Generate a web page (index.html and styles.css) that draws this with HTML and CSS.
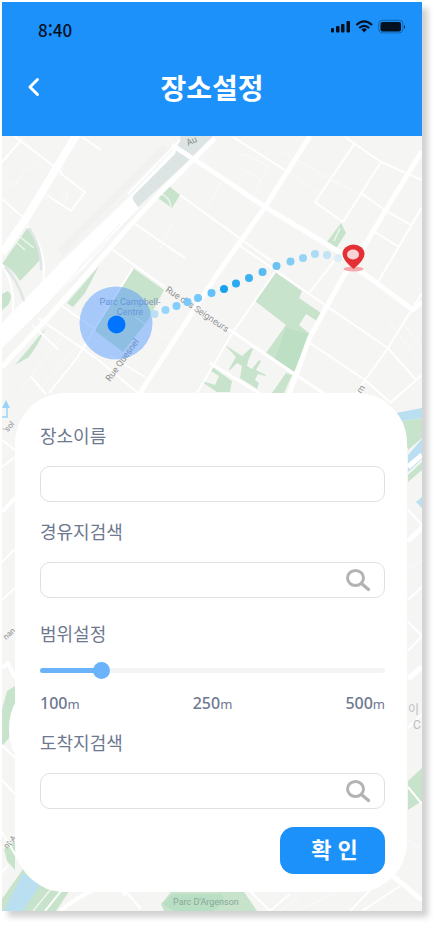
FILE: index.html
```html
<!DOCTYPE html>
<html lang="ko">
<head>
<meta charset="utf-8">
<meta name="viewport" content="width=device-width, initial-scale=1">
<title>장소설정</title>
<link rel="stylesheet" href="styles.css">
</head>
<body>
<div class="phone">
  <header class="header">
    <div class="status">
      <span class="time">8:40</span>
      <svg class="status-icons" viewBox="330 17 76 20" aria-hidden="true">
        <g fill="#03101f">
          <rect x="331" y="28" width="3" height="4.500" rx="1"/>
          <rect x="336" y="26" width="3.500" height="6.500" rx="1"/>
          <rect x="341" y="24" width="3.500" height="8.500" rx="1"/>
          <rect x="346.500" y="21" width="3.500" height="11.500" rx="1"/>
          <rect x="380.500" y="22" width="20.500" height="9.500" rx="2"/>
          <path d="M404 25q1.800 1.800 0 4z"/>
          <path d="M361.500 29.500q2.700-2.400 5.400 0l-2.700 3z"/>
        </g>
        <rect x="378.800" y="20.300" width="24" height="12.600" rx="3.500" fill="none" stroke="#03101f" stroke-opacity=".35"/>
        <g fill="none" stroke="#03101f" stroke-width="2.200">
          <path d="M356.400 25q7.800-7.200 15.600 0"/>
          <path d="M359.200 28q5-4.400 10 0"/>
        </g>
      </svg>
    </div>
    <div class="titlebar">
      <button class="back" type="button" aria-label="뒤로">
        <svg viewBox="0 0 20 20" aria-hidden="true"><path d="M13.500 2.500 6 10l7.500 7.500" fill="none" stroke="#fff" stroke-width="3" stroke-linecap="round" stroke-linejoin="round"/></svg>
      </button>
      <h1 class="title">장소설정</h1>
    </div>
  </header>

  <main class="content">
    <svg class="map" viewBox="2 136 420 775" preserveAspectRatio="xMidYMin slice" aria-hidden="true">
      <rect x="2" y="136" width="420" height="775" fill="#f5f5f4"/>
      <path d="M165 147 60 252" fill="none" stroke="#f1f1f0" stroke-width="7"/>
      <!-- parks -->
      <g fill="#c8e3cc">
        <path d="M28 227q11 14 13 32l-21 22q-7-12-18-17z"/>
        <path d="M2 294l6-3q6 5 0 14l-6 5z"/>
        <path d="M158 198l11-12 11 9-8 13z"/>
        <path d="M326 243l15-20 5 10-11 17z"/>
        <path d="M133 268l31 22-16 30-25 32-29-22z"/>
        <path d="M99 266l-32 37 6 4 12-14z"/>
        <path d="M46 328l-31 37 14-8 8-12z"/>
        <path d="M275 272l27 19-3 7 22 15-4 8-11-7-7 11 11 9-16 38-28-19 20-28-31-24z"/>
        <path d="M225 345l17 11 9-8 2 1-5 12-1 5 5 3 7-9 2 1-5 9 10 5-1 1-7-2-3 6 4 3-2 6-17-11 2-12-5-3-7 7-1-1 7-12z"/>
        <path d="M211 366l21 15-2 11h-13l-15-10v-1l13 4 4-9-8-5z"/>
        <path d="M286 373l6 2-8 18h-12z"/>
        <path d="M402 421l20-3v20l-14 12zM408 475l14-13v8l-14 12z"/>
        <path d="M15 686l-8 5-5 19v36l7-8 6-20z"/>
        <path d="M408 781l14-13v33l-14 9z"/>
        <path d="M4 849l11-8v29l-8-9z"/>
        <path d="M2 899l28-40 40 31-14 21H2z"/>
        <path d="M161 904l10-12h73l13 19h-93z"/>
      </g>
      <path d="M286 328l24 6-16 38-19-13z" fill="#bddfc3"/>
      <path d="M173 894h48l4 8-12 9h-39l-12-7z" fill="#b8dfc4"/>
      <!-- water -->
      <g fill="#b9dff1">
        <path d="M396 413l26-5v10l-20 3zM408 455l14-16v20l-14 13zM416 502l6-5v11z"/>
        <path d="M23 873l17 12-17 26H4z"/>
      </g>
      <path d="M161 194q9 3 10 13M20 237l14 11M17 243l8 7M334 241l6-13M33 911l18-22" fill="none" stroke="#edf6ee" stroke-width="1.500"/>
      <!-- streets -->
      <g fill="none" stroke="#fff" stroke-width="2" stroke-linejoin="round">
        <path d="M14 136l48 36M22 139 2 162M82 137l19 13M47 195l24 16 14-19-25-19M2 199l16 14 11 9"/>
        <path d="M180 195l58 42 42 30M135 224l50 34M110 248l55 39"/>
        <path d="M233 137l55 35M345 137l36 25 41 18M355 143l-40 59 28 20 38-60M361 193l24 17 26 15M422 207l-31 53-13 22M375 232l24 15"/>
        <path d="M236 243l92 64 60 41 28 32M335 260l-25 32M310 343l55 37 26 23M422 293l-34 55-23 32-18 28M422 375l-32 28M275 272l-42 60-36 61M38 318l58 40 42 35M32 325l27 25M133 268l-38 60-18 30-28 35M31 377l15 17M62 306l34 24M109 355l36 22"/>
        <path d="M27 226q15 18 17 39 1 22-8 35M2 264q15 25 10 52"/>
        <path d="M2 440l13 10M2 467l13-10M2 562l13-13M2 600l13-12M408 510l14 15-14 17M408 600l14-13M408 622l14 14-14 15M408 728l14-14M408 787l14 17M2 745l13 13M2 780l13 14M2 832l20 34M8 865l-6 8M45 911l16-20M126 892l15 17M250 891l20 20 20-17M350 911l30-31M362 911l38-25"/>
      </g>
      <g fill="none" stroke="#fbfbfb" stroke-width="1">
        <path d="M8 183l7 2 10-14 14-9M60 198l4-8 4 5-4 8M230 165l14-11 24 12-14 28M240 178l7-7 15 10M288 172l30 20M280 150l60 35M335 181l42 23M224 176l-16 30M175 220l-16 30M388 320l34 45M406 327l16 21"/>
        <path d="M20 390l44-56M30 400l51-58M175 345l-40-28M408 570l14-10M408 840l14 10M280 911l22-17M300 910l36-17"/>
      </g>
      <!-- rail yard -->
      <path d="M174 149 128 198 60 263 2 323v25l78-76 59-64-5-7 46-44z" fill="#fff"/>
      <path d="M181 136h32l-26 26-49 45-5-7v-4l42-42 3-8z" fill="#dde4e4"/>
      <g fill="none" stroke="#f0f1f0" stroke-width="1">
        <path d="M172 146l-44 48-70 66M132 216l-48 48-44 48M120 224l-42 44"/>
      </g>
      <!-- major roads -->
      <g fill="none" stroke="#fff" stroke-linejoin="round">
        <path d="M180 140 128 194" stroke-width="2"/>
        <path d="M77 134 25 220 2 253" stroke-width="8"/>
        <path d="M215 138l-26 26-32 32-23 25-24 27-23 26-44 49-41 44" stroke-width="5"/>
        <path d="M172 145l46 30 47 32 76 46 14 14 58 43 9-8" stroke-width="5"/>
        <path d="M310 136l-45 71-47 66-80 123M422 151l-35 57-22 37-22 32-33 60-22 60" stroke-width="5"/>
        <path d="M210 363l52 32M233 332l63 43 30 20M200 312l33 20" stroke-width="3"/>
        <path d="M408 467l14-12M408 541l14-13M408 679l14-12M388 872l34 28" stroke-width="5"/>
        <path d="M60 911q50-39 66-16M2 512l13-14M2 668l6-5 7 15" stroke-width="4"/>
      </g>
      <path d="M29 228q13 20 12 42M5 267q12 12 19 34" fill="none" stroke="#e0e5e5" stroke-width="2.500"/>
      <path d="M2 417h5v-11" fill="none" stroke="#9bd3f7" stroke-width="1.500"/>
      <path d="M2 408l4-8 4 8z" fill="#9bd3f7"/>
      <g class="map-text">
        <text class="park" x="130" y="305" text-anchor="middle">Parc Campbell-</text>
        <text class="park" x="130" y="315" text-anchor="middle">Centre</text>
        <text transform="translate(165 291) rotate(34)">Rue des Seigneurs</text>
        <text transform="translate(110 382) rotate(-54)">Rue Quesnel</text>
        <text transform="translate(361 394) rotate(-55)">m</text>
        <text transform="translate(188 146) rotate(-25)">Au</text>
        <text class="edge" transform="translate(7 433) rotate(-48)">'sol</text>
        <text class="edge" transform="translate(6 640) rotate(-42)">nan</text>
        <text class="edge" transform="translate(7 849) rotate(-48)">nt-A</text>
        <text class="park-green" x="173" y="905">Parc D'Argenson</text>
        <text class="district" x="408" y="714">이</text>
        <text class="district" x="413" y="729">C</text>
      </g>
      <ellipse cx="31" cy="729" rx="22" ry="38" fill="#fff"/>
      <!-- current position and route -->
      <circle cx="116" cy="323" r="36.500" fill="#4b94ff" fill-opacity=".46"/>
      <circle cx="116.500" cy="324.500" r="9" fill="#0073ff"/>
      <g>
        <circle cx="154.500" cy="314" r="4" fill="#b9e0f4"/>
        <circle cx="165.500" cy="310" r="4" fill="#97d5fb"/>
        <circle cx="176.500" cy="306" r="4" fill="#84cdfb"/>
        <circle cx="187.500" cy="302" r="4" fill="#78c8fa"/>
        <circle cx="198" cy="298" r="4" fill="#74c7fb"/>
        <circle cx="211.500" cy="293" r="4" fill="#62c0fa"/>
        <circle cx="224" cy="289" r="4" fill="#1aa2ee"/>
        <circle cx="236" cy="283.500" r="4" fill="#29a9f0"/>
        <circle cx="249" cy="278" r="4" fill="#3eb1f1"/>
        <circle cx="262.500" cy="272" r="4" fill="#58baf1"/>
        <circle cx="276.500" cy="266" r="4" fill="#6dc2f2"/>
        <circle cx="290.500" cy="261.500" r="4" fill="#83ccf3"/>
        <circle cx="303" cy="258" r="4" fill="#97d4f4"/>
        <circle cx="315" cy="254" r="4" fill="#acdcf4"/>
        <circle cx="327" cy="255" r="4" fill="#c2e4f4"/>
        <circle cx="338" cy="258" r="4" fill="#dbeef7"/>
      </g>
      <ellipse cx="353.500" cy="269" rx="10" ry="2.500" fill="#f6a9aa"/>
      <path d="M353.500 269q-11-9-11-15a11 9.500 0 0 1 22 0q0 6-11 15z" fill="#e33035"/>
      <ellipse cx="353" cy="254.500" rx="6" ry="5" fill="#fad4d5"/>
    </svg>

    <form class="card">
      <label class="label" for="place">장소이름</label>
      <div class="field"><input id="place" type="text"></div>

      <label class="label" for="via">경유지검색</label>
      <div class="field">
        <input id="via" type="text">
        <button class="search" type="button" aria-label="경유지검색">
          <svg viewBox="0 0 24 24" aria-hidden="true"><g fill="none" stroke="#b3b3b3"><ellipse cx="9.500" cy="10" rx="8" ry="7.500" stroke-width="3"/><path d="M15.500 15.500l7 6" stroke-width="3.200" stroke-linecap="round"/></g></svg>
        </button>
      </div>

      <label class="label label-range" for="range">범위설정</label>
      <input class="range" id="range" type="range" min="100" max="500" value="165">
      <div class="scale">
        <span>100<small>m</small></span>
        <span>250<small>m</small></span>
        <span>500<small>m</small></span>
      </div>

      <label class="label label-end" for="dest">도착지검색</label>
      <div class="field">
        <input id="dest" type="text">
        <button class="search" type="button" aria-label="도착지검색">
          <svg viewBox="0 0 24 24" aria-hidden="true"><g fill="none" stroke="#b3b3b3"><ellipse cx="9.500" cy="10" rx="8" ry="7.500" stroke-width="3"/><path d="M15.500 15.500l7 6" stroke-width="3.200" stroke-linecap="round"/></g></svg>
        </button>
      </div>

      <button class="submit" type="button">확 인</button>
    </form>
  </main>
</div>
</body>
</html>
```
FILE: styles.css
```css
* {
  box-sizing: border-box;
}

body {
  margin: 0;
  padding: 2px 16px 17px 2px;
  min-height: 100vh;
  display: flex;
  background: #fff;
  font-family: "Noto Sans CJK KR", "Noto Sans", sans-serif;
}

button,
input {
  font: inherit;
  margin: 0;
  padding: 0;
  border: 0;
  background: none;
}

.phone {
  flex: 1;
  min-width: 0;
  display: flex;
  flex-direction: column;
  box-shadow: 6px 6px 6px rgba(0, 0, 0, 0.18);
}

.header {
  padding: 15px 0 27px;
  background: #1c91fa;
}

.status {
  display: flex;
  justify-content: space-between;
  align-items: flex-start;
  padding: 0 16px 0 36px;
}

.time {
  font-size: 17px;
  line-height: 26px;
  font-weight: 500;
  color: #03101f;
}

.status-icons {
  width: 76px;
  height: 20px;
}

.titlebar {
  display: grid;
  grid-template-columns: 44px 1fr 44px;
  align-items: center;
  margin-top: 22px;
  padding: 0 10px;
}

.back {
  display: flex;
  align-items: center;
  justify-content: center;
  height: 44px;
}

.back svg {
  width: 20px;
  height: 20px;
}

.title {
  margin: 0;
  text-align: center;
  font-size: 28px;
  line-height: 44px;
  font-weight: 700;
  color: #fff;
}

.content {
  flex: 1;
  position: relative;
  display: flex;
  flex-direction: column;
  justify-content: flex-end;
  padding: 257px 15px 19px 13px;
}

.map {
  position: absolute;
  inset: 0;
  width: 100%;
  height: 100%;
}

.map-text {
  font-family: Roboto, "Noto Sans CJK KR", sans-serif;
  font-size: 9px;
  fill: #8f9092;
}

.edge {
  font-size: 8px;
}

.park {
  fill: #8294bb;
}

.park-green {
  font-size: 9px;
  fill: #8ca696;
}

.district {
  font-size: 12px;
  fill: #bdbdbd;
}

.card {
  position: relative;
  display: flex;
  flex-direction: column;
  padding: 31px 22px 18px 25px;
  border-radius: 50px;
  background: #fff;
}

.label {
  font-size: 18px;
  line-height: 22px;
  color: #6e7890;
}

.field {
  display: flex;
  align-items: center;
  height: 36px;
  margin: 20px 0 18px;
  padding: 0 14px;
  border: 1px solid #e0e0e0;
  border-radius: 10px;
}

.field input {
  flex: 1;
  min-width: 0;
  height: 100%;
  outline: 0;
  font-size: 16px;
  color: #6e7890;
}

.search,
.search svg {
  display: block;
  width: 24px;
  height: 24px;
}

.label-range {
  margin-top: 6px;
}

.range {
  appearance: none;
  width: 100%;
  height: 24px;
  margin-top: 14px;
}

.range::-webkit-slider-runnable-track {
  height: 5px;
  border-radius: 3px;
  background: linear-gradient(to right, #6ab3fb 17%, #f4f4f4 17%);
}

.range::-webkit-slider-thumb {
  appearance: none;
  width: 17px;
  height: 17px;
  margin-top: -6px;
  border-radius: 50%;
  background: #6ab3fb;
}

.scale {
  display: flex;
  justify-content: space-between;
  margin-top: 9px;
  font-family: "Noto Sans", sans-serif;
  font-size: 16px;
  line-height: 24px;
  font-weight: 500;
  color: #6e7890;
}

.scale small {
  font-size: 13px;
  font-weight: 400;
}

.label-end {
  margin-top: 15px;
}

.submit {
  align-self: flex-end;
  width: 105px;
  height: 47px;
  padding: 0 0 6px 4px;
  border-radius: 14px;
  background: #1c91fa;
  color: #fff;
  font-size: 22px;
  font-weight: 700;
}
```
